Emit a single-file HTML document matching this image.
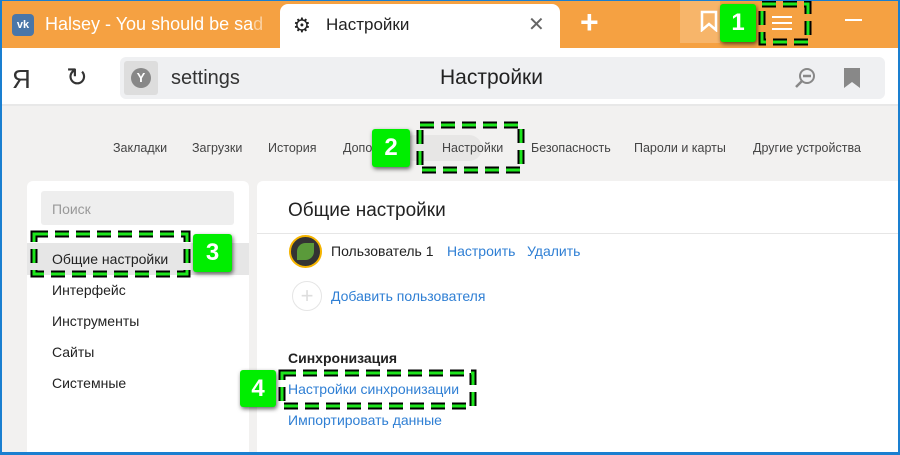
<!DOCTYPE html>
<html><head><meta charset="utf-8"><style>
*{margin:0;padding:0;box-sizing:border-box}
html,body{width:900px;height:455px;overflow:hidden}
body{font-family:"Liberation Sans","DejaVu Sans",sans-serif;background:#f2f1f0;position:relative}
.a{position:absolute}
.t{position:absolute;white-space:nowrap}
.lbl{position:absolute;background:#00ee00;color:#fff;font-weight:bold;font-size:24px;text-align:center;border-radius:3px;box-shadow:1px 2px 4px rgba(0,0,0,.6);line-height:38px}
.nav{position:absolute;top:141px;font-size:12.5px;color:#444}
</style></head><body>
<div class="a" style="left:0;top:0;width:900px;height:48px;background:#f5a142"></div>
<div class="a" style="left:12px;top:14px;width:22px;height:22px;background:#4a76a8;border-radius:4px;color:#fff;font-size:11px;font-weight:bold;text-align:center;line-height:22px">vk</div>
<div class="t" style="left:45px;top:14px;font-size:18px;color:#fff">Halsey - You should be sa<span style="opacity:.5">d</span></div>
<div class="a" style="left:280px;top:4px;width:280px;height:46px;background:#fff;border-radius:8px 8px 0 0"></div>
<div class="t" style="left:293px;top:13px;font-size:20px;color:#222">⚙</div>
<div class="t" style="left:326px;top:15px;font-size:17px;color:#222">Настройки</div>
<div class="t" style="left:528px;top:12px;font-size:20px;color:#666">✕</div>
<div class="t" style="left:580px;top:4px;font-size:32px;color:#fff;font-weight:bold">+</div>
<div class="a" style="left:680px;top:0;width:40px;height:43px;background:#f7b56a"></div>
<svg class="a" style="left:700px;top:10px" width="18" height="22"><path d="M2 2H16V20L9 14L2 20Z" fill="none" stroke="#fff" stroke-width="2.5"/></svg>
<div class="a" style="left:772px;top:16px;width:20px;height:2px;background:#fff"></div>
<div class="a" style="left:772px;top:22px;width:20px;height:2px;background:#fff"></div>
<div class="a" style="left:772px;top:28px;width:20px;height:2px;background:#fff"></div>
<div class="a" style="left:845px;top:19px;width:17px;height:2px;background:#fff"></div>
<div class="a" style="left:0;top:48px;width:900px;height:58px;background:#fff;border-bottom:2px solid #e8e8e8"></div>
<div class="t" style="left:12px;top:64px;font-size:26px;color:#333">Я</div>
<div class="t" style="left:66px;top:62px;font-size:26px;color:#333">↻</div>
<div class="a" style="left:120px;top:57px;width:765px;height:42px;background:#eff0f2;border-radius:6px"></div>
<div class="a" style="left:124px;top:61px;width:34px;height:34px;background:#ddd;border-radius:3px"></div>
<div class="a" style="left:131px;top:68px;width:20px;height:20px;background:#888;border-radius:50%;color:#fff;font-size:13px;font-weight:bold;text-align:center;line-height:20px">Y</div>
<div class="t" style="left:171px;top:67px;font-size:20px;color:#333">settings</div>
<div class="t" style="left:440px;top:66px;font-size:21px;color:#222">Настройки</div>
<svg class="a" style="left:793px;top:66px" width="24" height="24"><circle cx="14" cy="10" r="7" fill="none" stroke="#888" stroke-width="2"/><path d="M10 10H18M9 15L3 21" stroke="#888" stroke-width="2.5"/></svg>
<svg class="a" style="left:844px;top:68px" width="16" height="20"><path d="M0 0H16V20L8 14L0 20Z" fill="#888"/></svg>
<div class="nav" style="left:113px">Закладки</div>
<div class="nav" style="left:192px">Загрузки</div>
<div class="nav" style="left:268px">История</div>
<div class="nav" style="left:343px">Дополнения</div>
<div class="a" style="left:402px;top:135px;width:80px;height:26px;background:#e7e6e5;border-radius:13px"></div>
<div class="nav" style="left:442px">Настройки</div>
<div class="nav" style="left:531px">Безопасность</div>
<div class="nav" style="left:634px">Пароли и карты</div>
<div class="nav" style="left:753px">Другие устройства</div>
<div class="a" style="left:27px;top:181px;width:222px;height:280px;background:#fff;border-radius:6px"></div>
<div class="a" style="left:41px;top:191px;width:193px;height:34px;background:#eeeeee;border-radius:3px"></div>
<div class="t" style="left:52px;top:201px;font-size:14px;color:#999">Поиск</div>
<div class="a" style="left:27px;top:243px;width:222px;height:32px;background:#e6e6e6"></div>
<div class="t" style="left:52px;top:251px;font-size:14px;color:#222">Общие настройки</div>
<div class="t" style="left:52px;top:282px;font-size:14px;color:#222">Интерфейс</div>
<div class="t" style="left:52px;top:313px;font-size:14px;color:#222">Инструменты</div>
<div class="t" style="left:52px;top:344px;font-size:14px;color:#222">Сайты</div>
<div class="t" style="left:52px;top:375px;font-size:14px;color:#222">Системные</div>
<div class="a" style="left:257px;top:181px;width:643px;height:280px;background:#fff;border-radius:6px 0 0 0"></div>
<div class="t" style="left:288px;top:200px;font-size:19px;color:#222">Общие настройки</div>
<div class="a" style="left:257px;top:233px;width:643px;height:1px;background:#e6e6e6"></div>
<div class="a" style="left:289px;top:235px;width:33px;height:33px;border-radius:50%;background:#333;border:2px solid #f5b400"></div>
<div class="a" style="left:297px;top:243px;width:17px;height:17px;border-radius:50% 0;background:#5a9a3a"></div>
<div class="t" style="left:331px;top:243px;font-size:14px;color:#222">Пользователь 1</div>
<div class="t" style="left:447px;top:243px;font-size:14px;color:#2f7fd4">Настроить</div>
<div class="t" style="left:527px;top:243px;font-size:14px;color:#2f7fd4">Удалить</div>
<div class="a" style="left:292px;top:281px;width:30px;height:30px;border-radius:50%;border:1px solid #e5e5e5;color:#ddd;text-align:center;line-height:27px;font-size:22px">+</div>
<div class="t" style="left:331px;top:288px;font-size:14px;color:#2f7fd4">Добавить пользователя</div>
<div class="t" style="left:288px;top:350px;font-size:14px;color:#222;font-weight:bold">Синхронизация</div>
<div class="t" style="left:288px;top:381px;font-size:14px;color:#2f7fd4">Настройки синхронизации</div>
<div class="t" style="left:288px;top:412px;font-size:14px;color:#2f7fd4">Импортировать данные</div>
<svg class="a" style="left:0;top:0" width="900" height="455">
<g fill="none" stroke-dasharray="14 7">
<rect x="762" y="4" width="46" height="38" stroke="#000" stroke-width="7"/>
<rect x="762" y="4" width="46" height="38" stroke="#1ee61e" stroke-width="3"/>
<rect x="420" y="125" width="101" height="45" stroke="#000" stroke-width="7"/>
<rect x="420" y="125" width="101" height="45" stroke="#1ee61e" stroke-width="3"/>
<rect x="34" y="234" width="153" height="40" stroke="#000" stroke-width="7"/>
<rect x="34" y="234" width="153" height="40" stroke="#1ee61e" stroke-width="3"/>
<rect x="282" y="373" width="191" height="33" stroke="#000" stroke-width="7"/>
<rect x="282" y="373" width="191" height="33" stroke="#1ee61e" stroke-width="3"/>
</g>
<rect x="0" y="0" width="2" height="455" fill="#1a7fd0"/>
<rect x="898" y="0" width="2" height="455" fill="#1a7fd0"/>
<rect x="0" y="452" width="900" height="3" fill="#1a7fd0"/>
<rect x="0" y="0" width="900" height="1" fill="#1a7fd0"/>
</svg>
<div class="lbl" style="left:720px;top:4px;width:36px;height:38px">1</div>
<div class="lbl" style="left:372px;top:129px;width:38px;height:38px">2</div>
<div class="lbl" style="left:193px;top:234px;width:39px;height:38px">3</div>
<div class="lbl" style="left:240px;top:370px;width:36px;height:37px">4</div>
</body></html>
